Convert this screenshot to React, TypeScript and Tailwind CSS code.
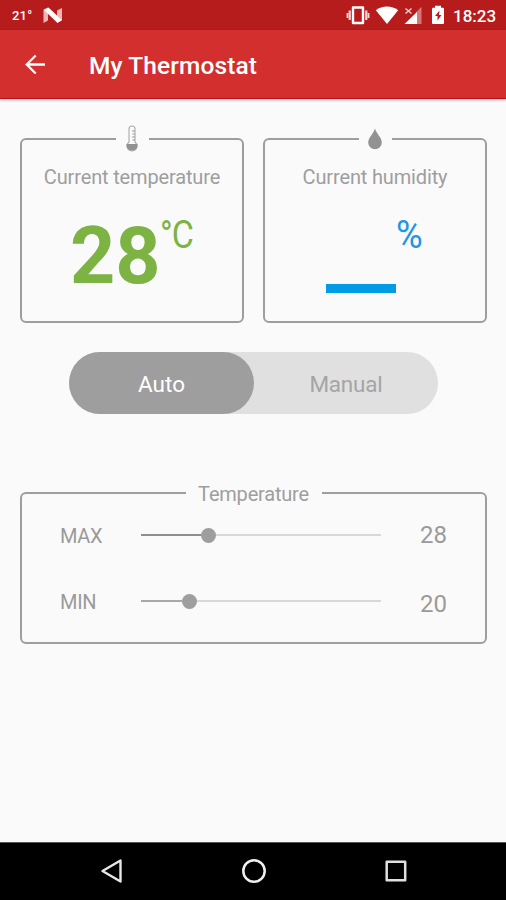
import type { ReactNode } from "react";

function StatusBar() {
  return (
    <div className="flex h-[30px] items-center bg-[#b71c1c] pr-[9px] pl-[12px] text-white">
      <span className="w-[31px] pt-px text-[13px] leading-none font-medium tracking-[0.2px]">21°</span>
      <svg className="mt-px" width="20" height="17" viewBox="0 0 20 17">
        <path d="M0.5 2.5 5 .5v13L.5 16z" fill="#efb5b5" />
        <path d="M14 3.5 19 1v12.5l-5 2.5z" fill="#efb5b5" />
        <path d="M1 3 5.5.5 18.7 13 14.5 16z" fill="#fff" />
      </svg>
      <div className="ml-auto flex items-center">
        <svg width="24" height="20" viewBox="0 0 24 20" fill="none">
          <path d="M7 2.5h10v15.5H7z" stroke="#fff" strokeWidth="2.4" strokeLinejoin="round" />
          <path d="M1.5 8v5M22.5 8v5" stroke="#f6d6d6" strokeWidth="1.8" />
          <path d="M3.7 5.5v9.5M20.3 5.5v9.5" stroke="#f6d6d6" strokeWidth="2.2" />
        </svg>
        <svg className="ml-[5px]" width="24" height="20" viewBox="0 0 24 20">
          <path d="M.8 5.2C7.4.2 16.6.2 23.2 5.2L12 19z" fill="#fff" />
        </svg>
        <svg className="ml-[5px]" width="18" height="20" viewBox="0 0 18 20">
          <path d="M17.5 1.8V19H12V7.2z" fill="#d87575" />
          <path d="M13 7V19H.5z" fill="#fff" />
          <path d="m1.5 3.5 6 5M7.5 3.5l-6 5" stroke="#f3cccc" strokeWidth="1.5" />
        </svg>
        <svg className="ml-[9px]" width="14" height="20" viewBox="0 0 14 20">
          <path d="M4 .8h6v2h2q1 0 1 1V18q0 1-1 1H2q-1 0-1-1V3.8q0-1 1-1h2z" fill="#fff" />
          <path d="M8.5 5.5 4 11h2.5v4.5L10.5 10H8z" fill="#b71c1c" />
        </svg>
        <span className="ml-[8px] w-[44px] pt-[2px] text-[17px] leading-none font-medium whitespace-nowrap">18:23</span>
      </div>
    </div>
  );
}

function AppBar() {
  return (
    <header className="flex h-[69px] items-center border-b border-[#bd1118] bg-[#d32f2f] pl-[25px] text-white shadow-[0_1px_3px_rgba(0,0,0,0.25)]">
      <svg width="21" height="20" viewBox="0 0 21 20" fill="none" stroke="#fff" strokeWidth="2.3">
        <path d="M20 10.5H2M10.7 1.5 1.7 10.5l9 9" />
      </svg>
      <h1 className="mt-[4px] ml-[43px] text-[24.5px] leading-none font-medium tracking-[0.1px]">My Thermostat</h1>
    </header>
  );
}

function Card({ icon, title, children }: { icon: ReactNode; title: string; children: ReactNode }) {
  return (
    <section className="flex h-[185px] flex-1 flex-col items-center rounded-[6px] border-2 border-[#9e9e9e]">
      <div className="-mt-[16px] flex h-[30px] w-[33px] items-center justify-center bg-[#fafafa]">{icon}</div>
      <h2 className="mt-[11px] text-[20px] leading-[24px] font-normal tracking-[-0.15px] text-[#9e9e9e]">{title}</h2>
      {children}
    </section>
  );
}

function Thermometer() {
  return (
    <svg width="14" height="28" viewBox="0 0 14 28">
      <path d="M4 17V4a3 3 0 0 1 6 0v13a5 5 0 1 1-6 0z" fill="#fafafa" stroke="#aaa" strokeWidth="1.1" />
      <path d="M1.5 19h11a5.5 5.5 0 0 1-11 2z" fill="#929292" />
      <path d="M7 6h3M7.5 9H10M7 12h3M7.5 15H10" stroke="#999" />
    </svg>
  );
}

function Drop() {
  return (
    <svg width="16" height="24" viewBox="0 0 16 24">
      <path d="M8 1.5C6.5 7 1.2 10.5 1.2 15.5a6.8 6.8 0 0 0 13.6 0C14.8 10.5 9.5 7 8 1.5z" fill="#929292" />
    </svg>
  );
}

type SliderProps = { label: string; value: number; fill: string; valueOffset: string };

function Slider({ label, value, fill, valueOffset }: SliderProps) {
  return (
    <div className="flex h-[30px] items-center text-[#9a9a9a]">
      <span className="w-[81px] pt-[2px] text-[20px] leading-none tracking-[-0.3px]">{label}</span>
      <div className="flex w-[240px] items-center">
        <div className={`h-[2px] ${fill}`} />
        <div className="size-[15px] rounded-full bg-[#9e9e9e]" />
        <div className="h-[2px] flex-1 bg-[#d8d8d8]" />
      </div>
      <span className={`ml-[39px] text-[24px] leading-none ${valueOffset}`}>{value}</span>
    </div>
  );
}

export default function App() {
  return (
    <div className="flex h-[900px] w-[506px] flex-col bg-[#fafafa] font-['Roboto',sans-serif]">
      <StatusBar />
      <AppBar />
      <main className="flex-1 pt-[39px] pr-[19px] pl-[20px]">
        <div className="flex gap-[19px]">
          <Card icon={<Thermometer />} title="Current temperature">
            <div className="mt-[23px] flex items-start self-stretch pl-[48px] text-[#7cb342]">
              <span className="mt-[8px] w-[90px] text-[79px] leading-[72px] font-bold">28</span>
              <span className="origin-left scale-x-[0.87] text-[39px] leading-[47px] font-normal tracking-[-1px]">°C</span>
            </div>
          </Card>
          <Card icon={<Drop />} title="Current humidity">
            <div className="mt-[23px] flex items-start self-stretch pl-[61px]">
              <div className="mt-[72px] h-[9px] w-[70px] bg-[#039be5]" />
              <span className="origin-left scale-x-[0.96] text-[38px] leading-[47px] font-normal text-[#1e96e0]">%</span>
            </div>
          </Card>
        </div>
        <div className="mt-[29px] ml-[49px] flex h-[62px] w-[369px] rounded-full bg-[#e0e0e0] text-[22.5px] leading-none">
          <button className="w-[185px] rounded-full bg-[#9e9e9e] pt-[2px] text-white">Auto</button>
          <button className="flex-1 pt-[2px] tracking-[-0.2px] text-[#a5a5a5]">Manual</button>
        </div>
        <section className="mt-[78px] flex h-[152px] flex-col rounded-[6px] border-2 border-[#9e9e9e] px-[38px]">
          <h2 className="-mt-[12px] h-[24px] w-[136px] self-center bg-[#fafafa] text-center text-[20px] leading-[24px] font-normal tracking-[-0.2px] text-[#9e9e9e]">
            Temperature
          </h2>
          <div className="mt-[14px] flex flex-col gap-[36px]">
            <Slider label="MAX" value={28} fill="w-[60px] bg-[#8e8e8e]" valueOffset="mt-0" />
            <Slider label="MIN" value={20} fill="w-[41px] bg-[#a8a8a8]" valueOffset="mt-[5px]" />
          </div>
        </section>
      </main>
      <nav className="flex h-[58px] items-center border-t border-[#555] bg-black pb-px pl-[100px]">
        <svg width="24" height="26" viewBox="0 0 24 26" fill="none" stroke="#e8e8e8" strokeWidth="2.4" strokeLinejoin="round">
          <path d="M20.5 2.5v21L2.5 13z" />
        </svg>
        <svg className="ml-[117px]" width="26" height="26" viewBox="0 0 26 26" fill="none" stroke="#f0f0f0" strokeWidth="2.5">
          <circle cx="13" cy="13" r="10.7" />
        </svg>
        <svg className="ml-[117px]" width="24" height="24" viewBox="0 0 24 24" fill="none" stroke="#e0e0e0" strokeWidth="2.5" strokeLinejoin="round">
          <path d="M2.7 2.7h18.5v18.5H2.7z" />
        </svg>
      </nav>
    </div>
  );
}
